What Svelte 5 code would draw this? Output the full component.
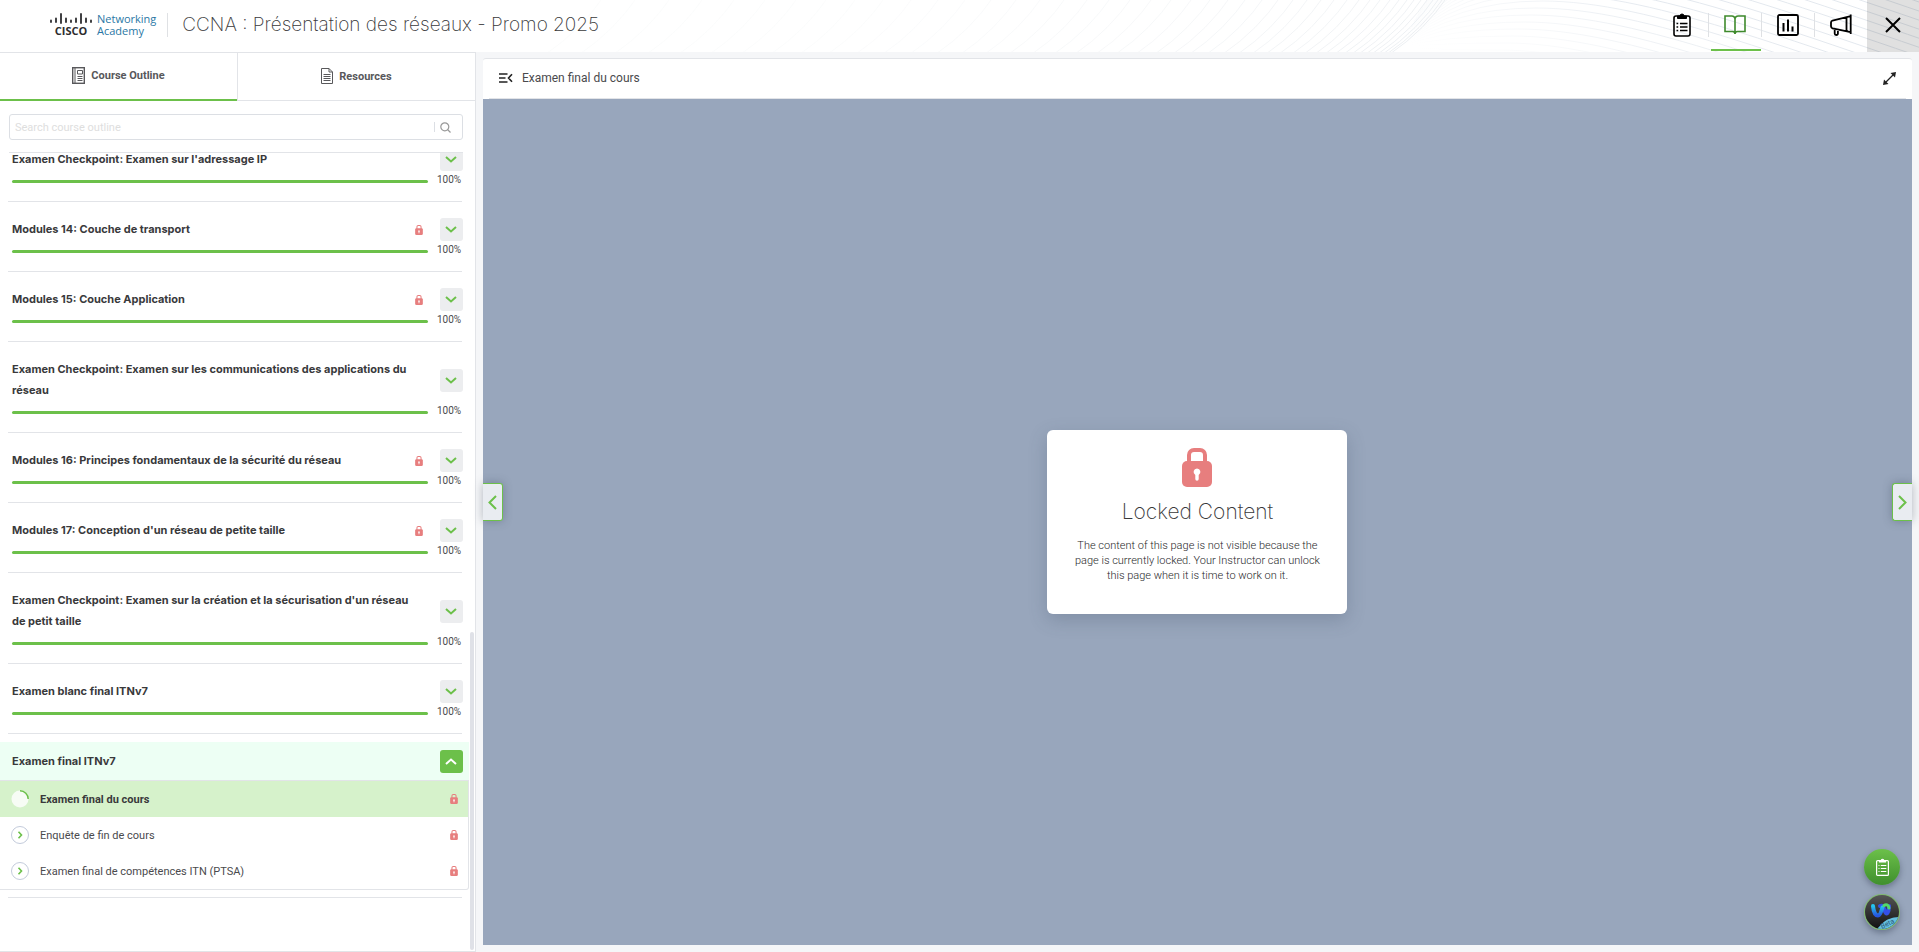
<script lang="ts">
  interface Item {
    title: string;
    locked?: boolean;
    progress: number;
  }

  const items: Item[] = [
    { title: "Examen Checkpoint: Examen sur l'adressage IP", progress: 100 },
    { title: 'Modules 14: Couche de transport', locked: true, progress: 100 },
    { title: 'Modules 15: Couche Application', locked: true, progress: 100 },
    { title: 'Examen Checkpoint: Examen sur les communications des applications du réseau', progress: 100 },
    { title: 'Modules 16: Principes fondamentaux de la sécurité du réseau', locked: true, progress: 100 },
    { title: "Modules 17: Conception d'un réseau de petite taille", locked: true, progress: 100 },
    { title: "Examen Checkpoint: Examen sur la création et la sécurisation d'un réseau de petit taille", progress: 100 },
    { title: 'Examen blanc final ITNv7', progress: 100 }
  ];

  const pages = ['Examen final du cours', 'Enquête de fin de cours', 'Examen final de compétences ITN (PTSA)'];
  let current = $state(0);

  // header background curves
  const fanLeft = Array.from({ length: 46 }, (_, i) => {
    const x = Math.round(1390 - i * 3 - i * i * 0.35);
    return { d: `M${x} 54Q${x + 35} 30 ${x + 58} -4`, opacity: Math.max(0.2, 1 - i / 45) };
  });
  const fanRight = Array.from({ length: 28 }, (_, i) => {
    const x = 1500 + i * 6;
    const y = 50 - i * 7;
    return {
      d: `M1400 47Q${1440 + i * 2} ${y} ${x} ${y}C${x + 110} ${y} ${x + 250} ${y + 60} ${x + 480} ${y + 135}`,
      opacity: Math.min(1, 0.25 + i / 12)
    };
  });
</script>

{#snippet lock()}
  <svg class="lock" viewBox="0 0 30 39" aria-hidden="true">
    <path d="M7 16V7a5 5 0 0 1 5-5h6a5 5 0 0 1 5 5v9" fill="none" stroke="#e77e7e" stroke-width="4" />
    <rect y="13" width="30" height="26" rx="5" fill="#e77e7e" />
    <path d="M15 20.500a3.500 3.500 0 0 1 1.700 6.500v4a1.700 1.700 0 0 1-3.400 0v-4a3.500 3.500 0 0 1 1.700-6.500z" fill="#fff" />
  </svg>
{/snippet}

<div class="app">
  <header class="topbar">
    <svg class="waves" viewBox="0 0 1919 52" preserveAspectRatio="xMaxYMid slice" aria-hidden="true">
      <defs>
        <linearGradient id="fade" gradientUnits="userSpaceOnUse" x1="1405" y1="0" x2="1640" y2="0">
          <stop stop-color="#e3e8ee" stop-opacity="0" />
          <stop offset="1" stop-color="#e3e8ee" />
        </linearGradient>
      </defs>
      <g fill="none" stroke="#eceff2">
        {#each fanLeft as line}<path d={line.d} opacity={line.opacity} />{/each}
      </g>
      <g fill="none" stroke="url(#fade)">
        {#each fanRight as line}<path d={line.d} opacity={line.opacity} />{/each}
      </g>
    </svg>

    <a class="brand" href="#home" aria-label="Cisco Networking Academy">
      <span class="cisco">
        <svg viewBox="0 0 42 11" width="42" height="11" aria-hidden="true">
          <path d="M1 7.500v1.500M6 5.500v3.500M11 1v9M16 5.500v3.500M21 7.500v1.500M26 5.500v3.500M31 1v9M36 5.500v3.500M41 7.500v1.500" stroke="#2d2d2f" stroke-width="1.800" stroke-linecap="round" />
        </svg>
        <b>CISCO</b>
      </span>
      <span class="academy">Networking<br />Academy</span>
    </a>
    <h1>CCNA : Présentation des réseaux - Promo 2025</h1>

    <nav class="tools" aria-label="Course tools">
      <button aria-label="Assignments">
        <svg width="18" height="24" viewBox="0 0 18 24" fill="none" stroke="#000" stroke-width="1.600">
          <rect x="1" y="3" width="16" height="20" rx="2" />
          <path d="M4.500 5.500V3H7a2 2 0 0 1 4 0h2.500v2.500z" fill="#000" stroke-width="1" />
          <path d="M7 10.500h7.500M7 14h7.500M7 17.500h7.500M3.500 10.500h1.700M3.500 14h1.700M3.500 17.500h1.700" />
        </svg>
      </button>
      <button class="active" aria-label="Course">
        <svg width="22" height="20" viewBox="0 0 22 20" fill="none" stroke="#3f8a2c" stroke-width="1.600">
          <path d="M11 3.500C10.500 1.800 9.500 1 8 1H1v15.500h7.500c1.500 0 2.500.8 2.500 2.500 0-1.700 1-2.500 2.500-2.500H21V1h-7c-1.500 0-2.500.8-3 2.500zM11 3.500V19" />
        </svg>
      </button>
      <button aria-label="Grades">
        <svg width="22" height="22" viewBox="0 0 22 22" fill="none" stroke="#000" stroke-width="1.800">
          <rect x="1" y="1" width="20" height="20" rx="1.500" />
          <path d="M6.500 9v8.500M11 5.500v12M15.500 12.500v5" stroke-width="2" />
        </svg>
      </button>
      <button aria-label="Announcements">
        <svg width="22" height="24" viewBox="0 0 22 24" fill="none" stroke="#000" stroke-width="1.800">
          <path d="M20.700 1.500v19.500M20.700 3.200 2.500 7.500C1.500 7.800 1 8.500 1 9.500v3.800c0 1 .5 1.700 1.500 2l18.200 3.800M16.500 4.200v14M4.700 16v4.500c0 1 .5 1.500 1.500 1.500s1.700-.5 1.700-1.500v-4" />
        </svg>
      </button>
      <button class="close" aria-label="Close">
        <svg width="16" height="16" viewBox="0 0 16 16"><path d="m1 1 14 14M15 1 1 15" stroke="#000" stroke-width="2" /></svg>
      </button>
    </nav>
  </header>

  <div class="body">
    <aside class="sidebar">
      <div class="tabs">
        <button class="tab selected">
          <svg width="13" height="17" viewBox="0 0 13 17" fill="none" stroke="#58585b">
            <rect x=".7" y=".7" width="11.600" height="15.600" stroke-width="1.400" />
            <path d="M3 1v15M5.500 3.500h5v3.500h-5zM5.500 9.500h5M5.500 11.500h5M5.500 13.500h5" />
          </svg>
          Course Outline
        </button>
        <button class="tab">
          <svg width="12" height="16" viewBox="0 0 12 16" fill="none" stroke="#58585b">
            <path d="M.5.500h7.500l3.500 3.500v11.500H.5zM8 .500V4h3.500M2.500 6.500h7M2.500 8.500h7M2.500 10.500h7M2.500 12.500h7" />
          </svg>
          Resources
        </button>
      </div>

      <form class="search" onsubmit={(e) => e.preventDefault()}>
        <input type="text" placeholder="Search course outline" aria-label="Search course outline" />
        <button aria-label="Search">
          <svg width="11" height="11" viewBox="0 0 11 11" fill="none" stroke="#999" stroke-width="1.200">
            <circle cx="4.800" cy="4.800" r="4" /><path d="m7.500 7.500 3 3" />
          </svg>
        </button>
      </form>

      <div class="outline">
        <div class="scroller">
          {#each items as item}
            <section class="item">
              <div class="row">
                <h2>{item.title}</h2>
                {#if item.locked}{@render lock()}{/if}
                <button class="toggle" aria-label="Expand">
                  <svg width="12" height="7" viewBox="0 0 12 7"><path d="m1 1 5 4.500L11 1" fill="none" stroke="#6cc04a" stroke-width="2" /></svg>
                </button>
              </div>
              <div class="progress">
                <div class="track"><i style={`width:${item.progress}%`}></i></div>
                <span>{item.progress}%</span>
              </div>
            </section>
          {/each}

          <section class="open">
            <div class="row">
              <h2>Examen final ITNv7</h2>
              <button class="toggle up" aria-label="Collapse">
                <svg width="12" height="7" viewBox="0 0 12 7"><path d="m1 6 5-4.500L11 6" fill="none" stroke="#fff" stroke-width="2" /></svg>
              </button>
            </div>
            <ul>
              {#each pages as page, i}
                <li class:current={current === i}>
                  <button onclick={() => (current = i)}>
                    <svg class="state" width="18" height="18" viewBox="0 0 18 18" fill="none">
                      {#if current === i}
                        <circle cx="9" cy="9" r="8.500" fill="#f7fcf5" />
                        <path d="M9 .800A8.200 8.200 0 0 1 17.200 9" stroke="#6cc04a" stroke-width="1.500" />
                      {:else}
                        <circle cx="9" cy="9" r="8.500" fill="#fff" stroke="#c3cbdb" />
                        <path d="M7.500 5.800 10.500 9l-3 3.200" stroke="#6cc04a" stroke-width="1.600" />
                      {/if}
                    </svg>
                    <span>{page}</span>
                    {@render lock()}
                  </button>
                </li>
              {/each}
            </ul>
          </section>
        </div>
        <div class="thumb"></div>
      </div>
    </aside>

    <main>
      <div class="panel-head">
        <button aria-label="Collapse outline">
          <svg width="14" height="10" viewBox="0 0 14 10" fill="none" stroke="#222" stroke-width="1.600">
            <path d="M0 1h8.500M0 5h6.500M0 9h8.500M13 1.200 9.500 5 13 8.800" />
          </svg>
        </button>
        <span>Examen final du cours</span>
        <button class="expand" aria-label="Full screen">
          <svg width="13" height="13" viewBox="0 0 13 13">
            <path d="M3 10l7-7" stroke="#222" stroke-width="1.200" /><path d="M7.500 1 13 0l-1 5.500zM5.500 12 0 13l1-5.500z" fill="#222" />
          </svg>
        </button>
      </div>
      <div class="stage">
        <div class="locked">
          {@render lock()}
          <h3>Locked Content</h3>
          <p>The content of this page is not visible because the page is currently locked. Your Instructor can unlock this page when it is time to work on it.</p>
        </div>

        <button class="step prev" aria-label="Previous page">
          <svg width="9" height="15" viewBox="0 0 9 15"><path d="M8 1 1.500 7.500 8 14" fill="none" stroke="#6cc04a" stroke-width="2" /></svg>
        </button>
        <button class="step next" aria-label="Next page">
          <svg width="9" height="15" viewBox="0 0 9 15"><path d="m1 1 6.500 6.500L1 14" fill="none" stroke="#6cc04a" stroke-width="2" /></svg>
        </button>

        <div class="floats">
          <button class="todo" aria-label="To do">
            <svg width="13" height="18" viewBox="0 0 13 18" fill="none" stroke="#fff" stroke-width="1.200">
              <rect x=".6" y="2.600" width="11.800" height="14.800" rx="1" />
              <path d="M3.500 4V2.500h1.800a1.200 1.200 0 0 1 2.400 0h1.800V4z" fill="#fff" />
              <path d="M4.800 7.500h5.500M4.800 10.500h5.500M4.800 13.500h5.500M2.500 7.500h1M2.500 10.500h1M2.500 13.500h1" />
            </svg>
          </button>
          <button class="webex" aria-label="Webex assistant, beta">
            <svg width="36" height="36" viewBox="0 0 36 36">
              <defs>
                <linearGradient id="dark" x2="0" y2="1"><stop stop-color="#555" /><stop offset="1" stop-color="#111" /></linearGradient>
                <linearGradient id="blue" x2="0" y2="1"><stop stop-color="#25c5ee" /><stop offset="1" stop-color="#2657e0" /></linearGradient>
                <clipPath id="disc"><circle cx="18" cy="18" r="17" /></clipPath>
              </defs>
              <circle cx="18" cy="18" r="18" fill="#7fb96d" />
              <circle cx="18" cy="18" r="17" fill="url(#dark)" />
              <g fill="none" stroke-width="4" stroke-linecap="round">
                <path d="M16 12c2.500-1 3.500 1 4.500 4s2 4.500 3 3c1.200-1.800 1.500-4 1.500-7" stroke="#3450e8" />
                <path d="M9 12c.5 6 2.500 9.500 5 9.500s3-4 4.500-8" stroke="url(#blue)" />
                <path d="M20 11.500c2-1.500 4.500-1 5 2.500" stroke="#52d869" stroke-width="3" />
              </g>
              <path d="M12 36c5-4 7-12 23-13v13z" fill="#64bfe0" clip-path="url(#disc)" />
              <text x="24" y="32" transform="rotate(-26 24 31)" text-anchor="middle" font-size="7" fill="#2b5a78">Beta</text>
            </svg>
          </button>
        </div>
      </div>
    </main>
  </div>
</div>

<style>
  :global(body) { background:#f5f6f8; }
  .app { height:100vh; display:flex; flex-direction:column; overflow:hidden; font-family:Roboto, Inter, "Liberation Sans", sans-serif; font-size:12px; color:#4a4a4d; }
  h1, h2, h3, p, ul { margin:0; padding:0; }
  h1, h2, h3 { font-family:Inter, "Liberation Sans", sans-serif; color:#39393b; }
  button { display:flex; align-items:center; justify-content:center; padding:0; border:0; background:none; font:inherit; color:inherit; cursor:pointer; }
  svg { flex:none; }

  .topbar { position:relative; display:flex; align-items:center; height:52px; background:#fff; flex:none; }
  .waves { position:absolute; inset:0; width:100%; height:100%; }
  .brand { position:relative; display:flex; gap:5px; align-items:center; height:24px; margin:0 0 2px 50px; padding-right:11px; border-right:1px solid #dfe1e4; text-decoration:none; }
  .cisco { display:flex; flex-direction:column; align-items:center; gap:1px; color:#2d2d2f; font:11px/12px "Open Sans", sans-serif; }
  .academy { color:#2a77a5; font:11px/12px "Open Sans", sans-serif; }
  h1 { position:relative; margin:0 0 2px 14px; font-size:19px; line-height:24px; font-weight:200; }
  .tools { position:relative; display:flex; margin-left:auto; height:52px; }
  .tools button { position:relative; width:53px; padding-bottom:2px; }
  .tools button + button:not(.close)::before { content:""; position:absolute; left:0; top:13px; height:24px; width:1px; background:#dfe1e4; }
  .tools .active::after { content:""; position:absolute; left:3px; right:0; bottom:1px; height:2px; background:#6cc04a; }
  .tools .close { width:52px; background:rgba(0,0,0,.12); }

  .body { display:flex; flex:1; min-height:0; }
  .sidebar { display:flex; flex-direction:column; box-sizing:border-box; width:24.8%; background:#fff; border:1px solid #e2e4e8; border-left:0; flex:none; }
  .tabs { display:flex; height:48px; flex:none; }
  .tab { flex:1; gap:6px; padding-bottom:1px; border-bottom:1px solid #e2e4e8; font-size:11px; font-weight:700; color:#58585b; }
  .tab + .tab { border-left:1px solid #e2e4e8; }
  .tab.selected { border-bottom:2px solid #6cc04a; }
  .search { display:flex; align-items:center; margin:13px 12px 12px 9px; height:24px; border:1px solid #dcdfe4; border-radius:3px; }
  .search input { flex:1; min-width:0; border:0; outline:0; padding:0 5px; font:inherit; font-size:11px; background:none; }
  .search input::placeholder { color:#dedede; }
  .search button { height:10px; width:28px; border-left:1px solid #dcdfe4; padding-right:5px; }
  .outline { position:relative; flex:1; min-height:0; overflow:hidden; display:flex; flex-direction:column; }
  .outline::before { content:""; position:absolute; z-index:1; left:9px; right:12px; top:0; height:1px; background:#e2e4e8; }
  /* list is scrolled to its end */
  .scroller { margin-top:-20px; padding-right:6px; }
  .item { margin:0 7px 0 8px; border-bottom:1px solid #e2e4e8; padding:17px 0 11px 4px; }
  .row { display:flex; align-items:center; }
  .item .row { margin-right:-1px; }
  h2 { flex:1; padding-right:18px; font-size:11px; line-height:21px; font-weight:700; }
  .lock { width:8px; height:10px; }
  .row .lock { margin-right:17px; }
  .toggle { width:23px; height:23px; margin:-1px 0; border-radius:3px; background:#ecedef; }
  .toggle.up { background:#6cc04a; }
  .progress { display:flex; align-items:center; gap:9px; height:18px; margin-top:2px; }
  .track { flex:1; height:3px; }
  .track i { display:block; height:3px; border-radius:2px; background:#6cc04a; }
  .progress span { width:25px; padding-bottom:3px; font-size:10px; }
  .open { margin-top:8px; }
  .open .row { height:38px; padding:0 6px 0 12px; background:#edfff4; }
  ul { list-style:none; border:1px solid #e2e4e8; border-left:0; border-radius:0 0 3px 0; }
  li.current { background:#d6f2cb; color:#39393b; font-weight:700; }
  li button { width:100%; height:36px; gap:11px; padding:0 10px 0 11px; font-size:11px; }
  li span { flex:1; text-align:left; }
  .open::after { content:""; display:block; height:1px; margin:7px 7px 0 8px; background:#e2e4e8; }
  .thumb { position:absolute; right:1px; bottom:1px; width:4px; height:318px; border-radius:2px; background:#dfe1e7; }

  main { display:flex; flex-direction:column; flex:1; min-width:0; margin:6px 7px 7px 7px; border-top:1px solid #e2e4e8; border-radius:3px; background:#fff; }
  .panel-head { display:flex; align-items:center; gap:9px; height:38px; margin:0 6px; padding:0 10px 1px; border-bottom:1px solid #e2e4e8; }
  .panel-head .expand { margin-left:auto; }
  .stage { position:relative; flex:1; display:flex; align-items:center; justify-content:center; background:#98a6bc; }
  .locked { display:flex; flex-direction:column; align-items:center; width:300px; box-sizing:border-box; padding:18px 24px 31px; border-radius:6px; background:#fff; box-shadow:0 6px 18px rgba(60,75,100,.25); text-align:center; }
  .locked .lock { width:30px; height:39px; }
  h3 { margin-top:11px; font-size:21px; line-height:28px; font-weight:200; }
  .locked p { margin-top:12px; font-size:11px; line-height:15px; font-weight:300; color:#28282a; }
  .step { position:absolute; top:50%; margin-top:-39px; width:20px; height:38px; box-sizing:border-box; border:1px solid #6cc04a; background:#e9ecf1; box-shadow:0 0 10px rgba(50,60,80,.35); }
  .prev { left:0; border-left:0; border-radius:0 3px 3px 0; }
  .next { right:0; border-right:0; border-radius:3px 0 0 3px; }
  .floats { position:absolute; right:12px; bottom:15px; display:grid; gap:9px; }
  .floats button { width:36px; height:36px; border-radius:50%; box-shadow:0 3px 6px rgba(40,50,70,.4); }
  .todo { background:linear-gradient(#6cc04a, #3f8f2d); }
</style>
